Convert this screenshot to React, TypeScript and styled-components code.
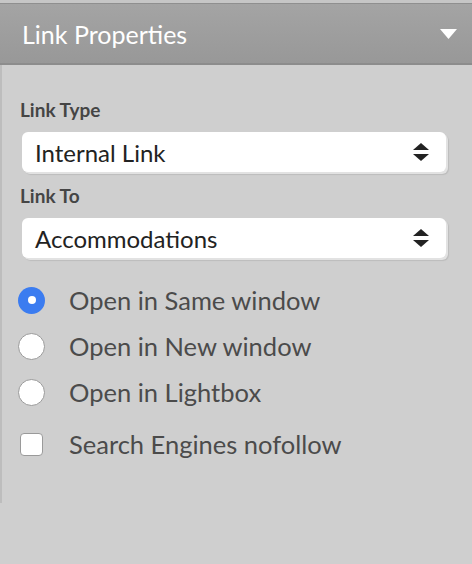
import React from "react";
import styled, { createGlobalStyle } from "styled-components";

const Global = createGlobalStyle`
  html, body { margin: 0; padding: 0; background: #cfcfcf; }
  body { font-family: Lato, "Noto Sans", sans-serif; }
`;

const Page = styled.div`
  width: 472px;
  height: 564px;
  background: #cfcfcf;
  border-top: 3px solid #c6c6c6;
  box-sizing: border-box;
`;

const Header = styled.div`
  height: 62px;
  box-sizing: border-box;
  border-top: 1px solid #8f8f8f;
  border-bottom: 2px solid #8c8c8c;
  background: linear-gradient(#a4a4a4, #989898);
  display: flex;
  align-items: center;
  justify-content: space-between;
  padding: 0 15px 0 22px;
`;

const Title = styled.h2`
  margin: 0;
  font-size: 25px;
  line-height: 30px;
  font-weight: 400;
  color: #ffffff;
`;

const Body = styled.div`
  border-left: 2px solid #bdbdbd;
  height: 438px;
  padding: 34px 26px 0 18px;
  box-sizing: border-box;
  display: flex;
  flex-direction: column;
`;

const Label = styled.div`
  font-size: 19px;
  line-height: 22px;
  font-weight: 700;
  color: #454545;
  margin-bottom: 11px;
`;

const SelectBox = styled.div`
  height: 40px;
  flex: none;
  background: #fff;
  border-radius: 6px;
  box-shadow: 2px 2px 0 #e2e2e2, 3px 3px 1px #bcbcbc;
  display: flex;
  align-items: center;
  justify-content: space-between;
  padding: 0 17px 0 13px;
  margin: 0 0 13px 2px;
  font-size: 24px;
  color: #222;
`;

const Options = styled.div`
  display: flex;
  flex-direction: column;
  margin-top: 6px;
`;

const OptionRow = styled.div<{ $gap?: number }>`
  display: flex;
  align-items: center;
  height: 46px;
  margin-top: ${(p) => p.$gap ?? 0}px;
  font-size: 25.5px;
  color: #4b4b4b;
`;

const Mark = styled.div`
  width: 49px;
  flex: none;
  display: flex;
  align-items: center;
`;

const Radio = styled.div<{ $on?: boolean }>`
  width: 27px;
  height: 27px;
  border-radius: 50%;
  box-sizing: border-box;
  background: ${(p) => (p.$on ? "#3b7cf0" : "#fff")};
  border: ${(p) => (p.$on ? "none" : "1px solid #9a9a9a")};
  display: flex;
  align-items: center;
  justify-content: center;
  margin-left: -2px;
`;

const Dot = styled.div`
  width: 8px;
  height: 8px;
  border-radius: 50%;
  background: #fff;
`;

const Check = styled.div`
  width: 23px;
  height: 23px;
  box-sizing: border-box;
  border: 1px solid #9a9a9a;
  border-radius: 4px;
  background: #fff;
`;

const Caret = () => (
  <svg width="17" height="10" viewBox="0 0 17 10">
    <path d="M0 0 H17 L8.5 10 Z" fill="#fff" />
  </svg>
);

const Updown = () => (
  <svg width="16" height="18" viewBox="0 0 16 18">
    <path d="M8 0 L16 7 H0 Z" fill="#222" />
    <path d="M0 11 H16 L8 18 Z" fill="#222" />
  </svg>
);

export default function App() {
  return (
    <>
      <Global />
      <Page>
        <Header>
          <Title>Link Properties</Title>
          <Caret />
        </Header>
        <Body>
          <Label>Link Type</Label>
          <SelectBox>
            <span>Internal Link</span>
            <Updown />
          </SelectBox>
          <Label>Link To</Label>
          <SelectBox>
            <span>Accommodations</span>
            <Updown />
          </SelectBox>
          <Options>
            <OptionRow>
              <Mark>
                <Radio $on>
                  <Dot />
                </Radio>
              </Mark>
              Open in Same window
            </OptionRow>
            <OptionRow>
              <Mark>
                <Radio />
              </Mark>
              Open in New window
            </OptionRow>
            <OptionRow>
              <Mark>
                <Radio />
              </Mark>
              Open in Lightbox
            </OptionRow>
            <OptionRow $gap={6}>
              <Mark>
                <Check />
              </Mark>
              Search Engines nofollow
            </OptionRow>
          </Options>
        </Body>
      </Page>
    </>
  );
}
